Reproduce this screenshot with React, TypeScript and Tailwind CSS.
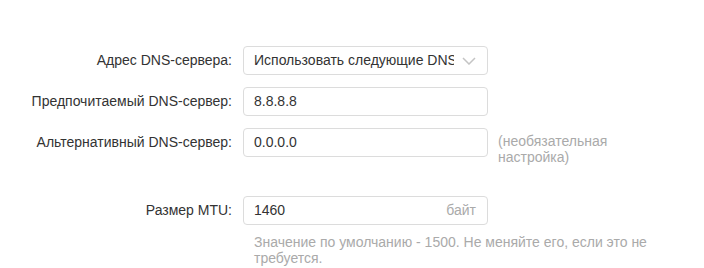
import React from "react";

const font = { fontFamily: '"Liberation Sans", Arial, sans-serif' };

const Row = ({
  label,
  children,
  note,
  className = "",
}: {
  label: string;
  children: React.ReactNode;
  note?: React.ReactNode;
  className?: string;
}) => (
  <div className={`flex items-start ${className}`}>
    <div className="w-[232px] shrink-0 h-[29px] flex items-center justify-end text-[14px] text-[#333]">
      {label}
    </div>
    <div className="ml-[11px] w-[245px] shrink-0">{children}</div>
    {note && (
      <div className="ml-[10px] pt-[5px] text-[14px] leading-[16px] text-[#aaa]">
        {note}
      </div>
    )}
  </div>
);

const Box = ({ children }: { children: React.ReactNode }) => (
  <div className="h-[29px] border border-[#dcdcdc] rounded-[4px] bg-white flex items-center pl-[10px] pr-[11px] text-[14px] text-[#333]">
    {children}
  </div>
);

export default function App() {
  return (
    <div style={font} className="w-[704px] h-[268px] bg-white pt-[46px] overflow-hidden">
      <Row label="Адрес DNS-сервера:">
        <Box>
          <span className="flex-1 whitespace-nowrap overflow-hidden">Использовать следующие DNS</span>
          <svg width="14" height="8" viewBox="0 0 14 8" className="ml-[8px] shrink-0">
            <path d="M1 1l6 6 6-6" fill="none" stroke="#c4c4c4" strokeWidth="1.5" />
          </svg>
        </Box>
      </Row>
      <Row label="Предпочитаемый DNS-сервер:" className="mt-[12px]">
        <Box>8.8.8.8</Box>
      </Row>
      <Row
        label="Альтернативный DNS-сервер:"
        className="mt-[12px]"
        note={
          <>
            (необязательная
            <br />
            настройка)
          </>
        }
      >
        <Box>0.0.0.0</Box>
      </Row>
      <Row label="Размер MTU:" className="mt-[31px]">
        <Box>
          <span className="flex-1">1460</span>
          <span className="text-[#aaa]">байт</span>
        </Box>
        <div className="mt-[9px] pl-[11px] text-[14px] leading-[16px] text-[#aaa] w-[420px]">
          Значение по умолчанию - 1500. Не меняйте его, если это не требуется.
        </div>
      </Row>
    </div>
  );
}
